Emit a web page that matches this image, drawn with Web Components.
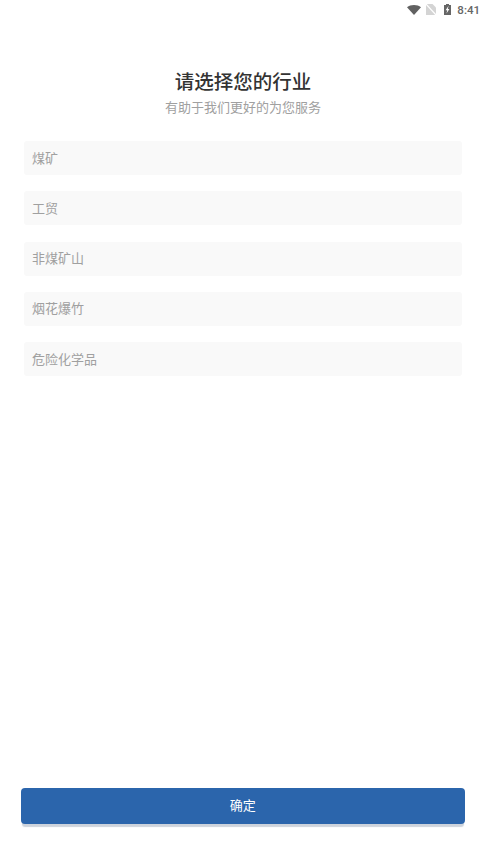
<!DOCTYPE html>
<html lang="zh">
<head>
<meta charset="utf-8">
<title>选择行业</title>
<style>
  html, body { margin: 0; padding: 0; height: 100%; background: #fff; }
  body { font-family: Roboto, "Noto Sans CJK SC", sans-serif; }
</style>
</head>
<body>
<industry-page>
  <status-bar slot="status"></status-bar>
  <page-heading slot="heading" title="请选择您的行业" subtitle="有助于我们更好的为您服务"></page-heading>
  <option-row>煤矿</option-row>
  <option-row>工贸</option-row>
  <option-row>非煤矿山</option-row>
  <option-row>烟花爆竹</option-row>
  <option-row>危险化学品</option-row>
  <confirm-button slot="footer">确定</confirm-button>
</industry-page>

<script>
class IndustryPage extends HTMLElement {
  constructor() {
    super();
    this.shadowDOM = this.attachShadow({ mode: "open" });
  }
  connectedCallback() {
    this.shadowDOM.innerHTML = `
      <style>
        :host { display: flex; flex-direction: column; height: 865px; box-sizing: border-box; padding-bottom: 41px; }
        .options { display: flex; flex-direction: column; gap: 16.25px; padding: 0 24px; }
        .footer { margin-top: auto; padding: 0 21px 0 20.5px; }
      </style>
      <slot name="status"></slot>
      <slot name="heading"></slot>
      <div class="options"><slot></slot></div>
      <div class="footer"><slot name="footer"></slot></div>
    `;
  }
}
customElements.define("industry-page", IndustryPage);

class StatusBar extends HTMLElement {
  constructor() {
    super();
    this.shadowDOM = this.attachShadow({ mode: "open" });
  }
  connectedCallback() {
    this.shadowDOM.innerHTML = `
      <style>
        :host { display: flex; align-items: center; justify-content: flex-end; height: 19px; padding-right: 6px; color: #666; font: 500 11.5px Roboto, sans-serif; }
        svg { display: block; }
        .wifi { margin-right: 5px; }
        .sim { margin-right: 8px; }
        .battery { margin-right: 6px; }
      </style>
      <svg class="wifi" width="14" height="10" viewBox="0 0 15 10" preserveAspectRatio="none"><path d="M0 2.200C2 .8 4.600 0 7.500 0s5.500.8 7.500 2.200L7.500 10z" fill="#616161"/></svg>
      <svg class="sim" width="10" height="11" viewBox="0 0 10 11"><path d="M0 0h6.500L10 3.500V11H0z" fill="#d4d4d4"/><path d="M0 0 10 11" stroke="#fff" stroke-width="1.200"/></svg>
      <svg class="battery" width="7" height="11" viewBox="0 0 7 11"><path d="M2 0h3v1h2v10H0V1h2z" fill="#666"/><path d="M4.600 1.800 1.600 6.200h1.600L2.500 9.600 5.400 5H3.800z" fill="#fff"/></svg>
      <span>8:41</span>
    `;
  }
}
customElements.define("status-bar", StatusBar);

class PageHeading extends HTMLElement {
  constructor() {
    super();
    this.shadowDOM = this.attachShadow({ mode: "open" });
  }
  connectedCallback() {
    this.shadowDOM.innerHTML = `
      <style>
        :host { display: block; text-align: center; padding: 48px 0 22px; font-family: "Noto Sans CJK SC", sans-serif; }
        h1 { margin: 0; font-size: 19.500px; line-height: 28px; font-weight: 500; color: #333; }
        p { margin: 0; font-size: 13px; line-height: 24px; color: #a0a0a0; }
      </style>
      <h1>${this.getAttribute("title")}</h1>
      <p>${this.getAttribute("subtitle")}</p>
    `;
  }
}
customElements.define("page-heading", PageHeading);

class OptionRow extends HTMLElement {
  constructor() {
    super();
    this.shadowDOM = this.attachShadow({ mode: "open" });
  }
  connectedCallback() {
    this.shadowDOM.innerHTML = `
      <style>
        :host { display: flex; align-items: center; height: 34px; box-sizing: border-box; padding: 0 8px 2px; border-radius: 3px; background: #f9f9f9; color: #a0a0a0; font: 13px "Noto Sans CJK SC", sans-serif; }
      </style>
      <slot></slot>
    `;
  }
}
customElements.define("option-row", OptionRow);

class ConfirmButton extends HTMLElement {
  constructor() {
    super();
    this.shadowDOM = this.attachShadow({ mode: "open" });
  }
  connectedCallback() {
    this.shadowDOM.innerHTML = `
      <style>
        :host { display: flex; align-items: center; justify-content: center; height: 36px; box-sizing: border-box; padding-bottom: 3px; border-radius: 4px; background: #2b65ac; color: #fff; font: 13px "Noto Sans CJK SC", sans-serif; box-shadow: 0 4px 1px -1px rgba(60, 85, 120, .26); }
      </style>
      <slot></slot>
    `;
  }
}
customElements.define("confirm-button", ConfirmButton);
</script>
</body>
</html>
